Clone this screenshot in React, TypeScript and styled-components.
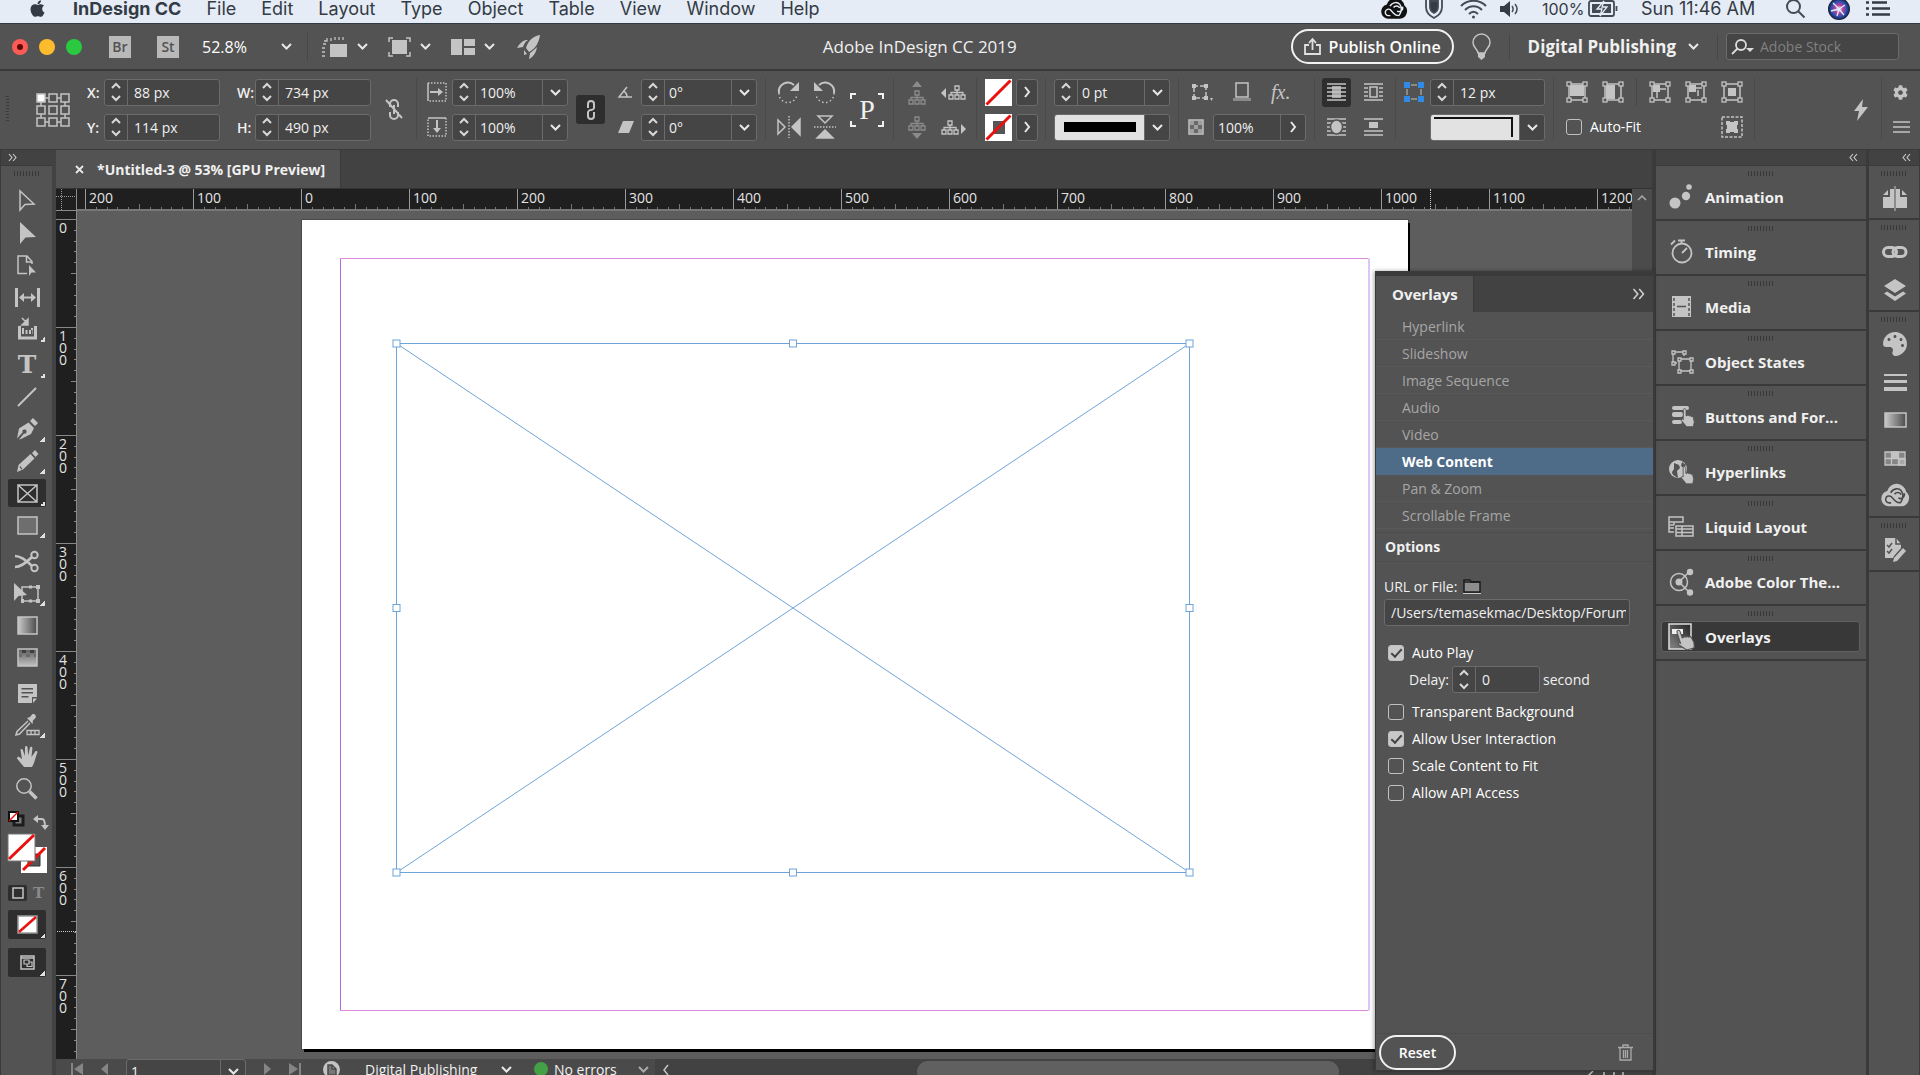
import React from "react";
import styled, { createGlobalStyle, css } from "styled-components";
import { FaApple, FaCog, FaPalette } from "react-icons/fa";

const c = {
  panel: "#535353",
  dark: "#424242",
  line: "#3a3a3a",
  field: "#454545",
  edge: "#6b6b6b",
  icon: "#c4c4c4",
  text: "#f0f0f0",
  ruler: "#1f1f1f",
  canvas: "#5d5d5d",
};

const Global = createGlobalStyle`
  * { box-sizing: border-box; }
  body { margin: 0; overflow: hidden; background: ${c.panel}; }
  body, button, input { font-family: "Open Sans", "Noto Sans", sans-serif; }
  button { padding: 0; border: 0; background: none; color: inherit; cursor: pointer; }
  button, label, span { white-space: nowrap; }
  svg { display: block; flex: none; overflow: visible; }
  input { min-width: 0; }
`;

/* ---------- shell ---------- */

const Shell = styled.div`
  display: flex;
  flex-direction: column;
  height: calc(100vh + 12px);
  color: ${c.text};
  font-size: 14px;
`;

const MenuBar = styled.nav`
  display: flex;
  align-items: center;
  height: 24px;
  padding: 0 30px 6px 28px;
  background: #e6ecf5;
  border-bottom: 1px solid #2f3a44;
  color: #333b45;
  font: 400 18px/20px Inter, sans-serif;
`;

const MenuItems = styled.div`
  display: flex;
  gap: 25px;
  flex: 1;
  padding-left: 26px;
`;

const MenuItem = styled.button<{ $bold?: boolean }>`
  font: ${(p) => (p.$bold ? 700 : 400)} 18px/20px Inter, sans-serif;
`;

const MenuExtras = styled.div`
  display: flex;
  align-items: center;
`;

const Extra = styled.span<{ $w: number; $size?: number }>`
  width: ${(p) => p.$w}px;
  display: flex;
  font-size: ${(p) => p.$size ?? 18}px;
`;

const TitleBar = styled.header`
  display: flex;
  align-items: center;
  height: 47px;
  padding: 0 21px 0 12px;
  background: ${c.panel};
  border-bottom: 2px solid ${c.line};
`;

const Cluster = styled.div<{ $gap: number; $ml?: number }>`
  display: flex;
  align-items: center;
  gap: ${(p) => p.$gap}px;
  margin-left: ${(p) => p.$ml ?? 0}px;
`;

const Light = styled.button<{ $c: string }>`
  display: grid;
  place-items: center;
  width: 16px;
  height: 16px;
  border-radius: 50%;
  background: ${(p) => p.$c};
  i { width: 6px; height: 6px; border-radius: 50%; background: #5c0a08; }
`;

const AppBadge = styled.button`
  width: 22px;
  height: 22px;
  background: #b9b9b9;
  color: #535353;
  font-size: 14px;
  font-weight: 600;
  line-height: 22px;
`;

const ZoomInput = styled.input`
  width: 73px;
  padding: 0 2px 0 1px;
  border: 0;
  background: none;
  color: #fff;
  font-size: 16px;
  font-weight: 500;
`;

const WindowTitle = styled.h1`
  flex: 1;
  margin: 0;
  padding-left: 8px;
  text-align: center;
  font-size: 17px;
  font-weight: 400;
`;

const Pill = styled.button<{ $w: number; $size: number }>`
  display: flex;
  align-items: center;
  justify-content: center;
  gap: 8px;
  width: ${(p) => p.$w}px;
  height: 35px;
  border: 2px solid #f2f2f2;
  border-radius: 18px;
  color: #fff;
  font-size: ${(p) => p.$size}px;
  font-weight: 600;
`;

const VLine = styled.i<{ $h: number }>`
  width: 1px;
  height: ${(p) => p.$h}px;
  background: #474747;
`;

const TightLine = styled(VLine)`
  margin: 0 -2px;
`;

const Workspace = styled.button`
  display: flex;
  align-items: center;
  gap: 12px;
  font-size: 17px;
  font-weight: 700;
`;

const StockSearch = styled.label`
  display: flex;
  align-items: center;
  gap: 5px;
  width: 173px;
  height: 27px;
  padding-left: 5px;
  border: 1px solid ${c.edge};
  border-radius: 3px;
  background: ${c.field};
  input {
    width: 120px;
    padding: 0;
    border: 0;
    background: none;
    color: ${c.text};
    font-size: 14px;
  }
  input::placeholder { color: #808080; }
`;

/* ---------- control strip ---------- */

const ControlBar = styled.section`
  display: flex;
  height: 79px;
  padding: 7px 0 9px;
  background: ${c.panel};
  border-bottom: 1px solid ${c.line};
`;

const Group = styled.div<{ $cols?: string; $pl?: number; $pr?: number; $grow?: boolean; $open?: boolean }>`
  display: grid;
  grid-template-columns: ${(p) => p.$cols ?? "auto"};
  grid-template-rows: 28px 28px;
  row-gap: 7px;
  align-items: center;
  padding: 0 ${(p) => p.$pr ?? 8}px 0 ${(p) => p.$pl ?? 8}px;
  border-right: ${(p) => (p.$open ? 0 : 1)}px solid #4a4a4a;
  ${(p) => p.$grow && css`flex: 1; justify-content: end;`}
`;

const Tall = styled.div`
  grid-row: span 2;
  display: flex;
`;

const Line = styled.div<{ $gap: number; $between?: boolean; $pl?: number }>`
  display: flex;
  align-items: center;
  gap: ${(p) => p.$gap}px;
  padding-left: ${(p) => p.$pl ?? 0}px;
  ${(p) => p.$between && css`justify-content: space-between;`}
`;

const Tag = styled.label`
  font-size: 14px;
  font-weight: 600;
`;

const Field = styled.div<{ $w: number }>`
  display: flex;
  width: ${(p) => p.$w}px;
  height: 27px;
  border: 1px solid ${c.edge};
  border-radius: 3px;
  background: ${c.field};
  overflow: hidden;
`;

const Steppers = styled.span`
  display: flex;
  flex-direction: column;
  width: 23px;
  border-right: 1px solid ${c.edge};
  button { display: grid; place-items: center; flex: 1; }
`;

const Value = styled.input<{ $strong?: boolean }>`
  flex: 1;
  width: 0;
  padding: 0 0 0 ${(p) => (p.$strong ? 4 : 6)}px;
  border: 0;
  background: none;
  color: ${c.text};
  font-size: 14px;
  font-weight: ${(p) => (p.$strong ? 500 : 400)};
`;

const DropButton = styled.button`
  display: grid;
  place-items: center;
  width: 25px;
  border-left: 1px solid ${c.edge};
`;

const MoreButton = styled.button`
  display: grid;
  place-items: center;
  width: 22px;
  height: 27px;
  border: 1px solid ${c.edge};
  border-radius: 3px;
  background: ${c.field};
`;

const Preview = styled.span`
  display: grid;
  place-items: center;
  flex: 1;
  background: #e2e2e2;
`;

const Toggle = styled.button<{ $on?: boolean }>`
  display: grid;
  place-items: center;
  width: 29px;
  height: 29px;
  border-radius: 3px;
  background: ${(p) => (p.$on ? "#2e2e2e" : "transparent")};
`;

const IconButton = styled.button<{ $dim?: boolean }>`
  display: block;
  opacity: ${(p) => (p.$dim ? 0.5 : 1)};
`;

const Frame = styled.span`
  display: grid;
  place-items: center;
  grid-area: 1 / 1;
  color: #f0f0f0;
  font: 28px/34px "Liberation Serif", serif;
`;

const Stacked = styled.span`
  display: grid;
`;

const Fx = styled.span`
  font: italic 20px/24px "Liberation Serif", serif;
  color: ${c.icon};
`;

const Check = styled.label`
  display: flex;
  align-items: center;
  gap: 8px;
  font-size: 14px;
  font-weight: 500;
  line-height: 16px;
  color: #fff;
`;

const Box = styled.input`
  appearance: none;
  flex: none;
  display: grid;
  place-items: center;
  width: 16px;
  height: 16px;
  margin: 0;
  border: 1px solid #c0c0c0;
  border-radius: 3px;
  &:checked { background: #c8c8c8; }
  &:checked::after {
    content: "";
    width: 9px;
    height: 4px;
    margin-bottom: 3px;
    border: solid #444;
    border-width: 0 0 2px 2px;
    rotate: -48deg;
  }
`;

/* ---------- body ---------- */

const Body = styled.div`
  display: flex;
  flex: 1;
  min-height: 0;
`;

const Toolbar = styled.aside`
  display: flex;
  flex-direction: column;
  width: 56px;
  background: ${c.panel};
  border-left: 1px solid ${c.line};
  border-right: 4px solid ${c.dark};
`;

const PanelTop = styled.div<{ $right?: boolean }>`
  display: flex;
  align-items: center;
  justify-content: ${(p) => (p.$right ? "flex-end" : "flex-start")};
  flex: none;
  height: 16px;
  padding: 0 8px 0 7px;
  background: ${c.dark};
  border-bottom: 1px solid ${c.line};
`;

const Grip = styled.i`
  display: block;
  flex: none;
  width: 26px;
  height: 5px;
  margin: 5px auto 0;
  background: repeating-linear-gradient(90deg, #383838 0 1px, transparent 1px 3px);
`;

const Tools = styled.div`
  display: flex;
  flex-direction: column;
  gap: 4px;
  padding: 9px 0 0 7px;
`;

const Tool = styled.button<{ $on?: boolean }>`
  display: grid;
  place-items: center;
  position: relative;
  width: 38px;
  height: 28px;
  margin: 2px 0;
  border-radius: 2px;
  background: ${(p) => (p.$on ? "#2e2e2e" : "transparent")};
`;

const ModeTool = styled(Tool)`
  height: 29px;
  margin: 0;
`;

const Flyout = styled.i`
  position: absolute;
  right: 1px;
  bottom: 1px;
  width: 5px;
  height: 5px;
  background: linear-gradient(135deg, transparent 50%, #e0e0e0 50%);
`;

const ToolSet = styled.div`
  display: flex;
  flex-direction: column;
`;

const SwatchArea = styled.div`
  display: flex;
  flex-direction: column;
  gap: 9px;
  padding: 6px 0 0 7px;
`;

const SerifT = styled.span<{ $size: number; $lh: number; $c?: string }>`
  font: 700 ${(p) => p.$size}px/${(p) => p.$lh}px "DejaVu Serif", serif;
  color: ${(p) => p.$c ?? c.icon};
`;

/* ---------- document ---------- */

const Doc = styled.main`
  position: relative;
  display: flex;
  flex-direction: column;
  flex: 1;
  min-width: 0;
  background: ${c.dark};
  border-right: 4px solid ${c.line};
`;

const Tabs = styled.div`
  display: flex;
  height: 39px;
  border-bottom: 1px solid #333;
`;

const Tab = styled.div`
  display: flex;
  align-items: center;
  gap: 13px;
  width: 285px;
  padding-left: 19px;
  background: ${c.panel};
  border-right: 1px solid ${c.line};
  font-size: 14px;
  font-weight: 700;
`;

const Stage = styled.div`
  display: grid;
  grid-template: 22px 1fr / 21px 1fr 20px;
  flex: 1;
  min-height: 0;
`;

const Corner = styled.div`
  background: ${c.ruler};
  border-right: 1px solid #8a8a8a;
  border-bottom: 1px solid #8a8a8a;
`;

const RulerX = styled.div`
  position: relative;
  display: flex;
  padding-left: 8px;
  overflow: hidden;
  background: ${c.ruler};
  border-bottom: 2px solid #777;
`;

const RulerY = styled.div`
  position: relative;
  padding-top: 8px;
  overflow: hidden;
  background: ${c.ruler};
  border-right: 1px solid #8a8a8a;
`;

const SegX = styled.div`
  display: grid;
  flex: none;
  width: 108px;
  > * { grid-area: 1 / 1; }
  span { padding-left: 4px; font-size: 14px; line-height: 18px; color: #e2e2e2; }
`;

const SegY = styled.div`
  display: grid;
  height: 108px;
  > * { grid-area: 1 / 1; }
  p {
    width: 9px;
    margin: 3px 0 0 3px;
    font-size: 14px;
    line-height: 12px;
    color: #e2e2e2;
    word-break: break-all;
  }
`;

const MarkX = styled.i`
  position: absolute;
  left: 1353px;
  top: 0;
  height: 20px;
  border-left: 1px dotted #ccc;
`;

const MarkY = styled.i`
  position: absolute;
  left: 1px;
  top: 720px;
  width: 19px;
  border-top: 1px dotted #ccc;
`;

const ScrollColumn = styled.div`
  grid-row: 1 / 3;
  grid-column: 3;
  padding: 6px 0 0 5px;
  background: #4b4b4b;
`;

const Canvas = styled.div`
  position: relative;
  overflow: hidden;
  background: ${c.canvas};
`;

const Page = styled.div`
  position: absolute;
  left: 225px;
  top: 9px;
  width: 1106px;
  height: 829px;
  background: #fff;
  box-shadow: 2px 3px 0 #000, 0 0 0 1px #4a4a4a;
`;

const StatusBar = styled.footer`
  display: flex;
  flex: none;
  height: 28px;
  background: #4a4a4a;
`;

const StatusTools = styled.div`
  display: flex;
  align-items: center;
  width: 599px;
  padding: 0 8px 8px 15px;
  font-size: 14px;
`;

const PageField = styled(Field)`
  flex: none;
  align-self: flex-start;
  height: 24px;
  margin: 0 18px;
`;

const StatusButton = styled.button<{ $w: number }>`
  display: flex;
  align-items: center;
  justify-content: space-between;
  width: ${(p) => p.$w}px;
  font-size: 14px;
  font-weight: 500;
`;

const Dot = styled.i`
  width: 14px;
  height: 14px;
  border-radius: 50%;
  background: #43a047;
`;

const ScrollTrack = styled.div`
  display: flex;
  align-items: flex-start;
  flex: 1;
  gap: 248px;
  padding: 2px 0 0 8px;
  background: ${c.dark};
`;

const Thumb = styled.div`
  width: 422px;
  height: 22px;
  border-radius: 11px;
  background: #606060;
`;

/* ---------- overlays panel ---------- */

const Overlays = styled.section`
  position: absolute;
  top: 121px;
  right: -3px;
  bottom: 16px;
  display: flex;
  flex-direction: column;
  width: 280px;
  background: ${c.panel};
  border: 1px solid ${c.line};
  border-top-width: 5px;
  border-right-width: 2px;
  box-shadow: -1px 0 4px rgba(0, 0, 0, 0.35);
`;

const OverlaysHead = styled.header`
  display: flex;
  align-items: center;
  justify-content: space-between;
  height: 36px;
  padding-right: 8px;
  background: ${c.dark};
  h2 {
    width: 98px;
    margin: 0;
    padding-left: 16px;
    background: ${c.panel};
    border-right: 1px solid ${c.line};
    font-size: 15px;
    font-weight: 700;
    line-height: 36px;
  }
`;

const Kinds = styled.ul`
  margin: 1px 0 3px;
  padding: 0;
  list-style: none;
`;

const Kind = styled.li<{ $on?: boolean }>`
  button {
    width: 100%;
    height: 27px;
    padding-left: 26px;
    border-bottom: 1px solid #595959;
    text-align: left;
    font-size: 14px;
    color: #a6a6a6;
    ${(p) =>
      p.$on &&
      css`
        background: #4e6b87;
        border-color: #4e6b87;
        color: #fff;
        font-weight: 700;
      `}
  }
`;

const OptionsTitle = styled.h3`
  margin: 0;
  padding-left: 9px;
  border: solid #4d4d4d;
  border-width: 1px 0;
  font-size: 14px;
  font-weight: 700;
  line-height: 28px;
`;

const OptionsForm = styled.form`
  display: flex;
  flex-direction: column;
  flex: 1;
  padding: 14px 23px 0 8px;
`;

const UrlLabel = styled.div`
  display: flex;
  align-items: center;
  gap: 6px;
  height: 20px;
  margin-bottom: 3px;
  font-weight: 500;
`;

const UrlInput = styled.input`
  height: 27px;
  padding: 0 3px 0 6px;
  border: 1px solid ${c.edge};
  border-radius: 3px;
  background: ${c.field};
  color: ${c.text};
  font-size: 14px;
`;

const Choices = styled.div`
  display: flex;
  flex-direction: column;
  gap: 11px;
  padding: 19px 0 0 4px;
`;

const Delay = styled.div`
  display: flex;
  align-items: center;
  gap: 3px;
  height: 27px;
  margin: -6px 0 0 21px;
  font-weight: 500;
`;

const OverlaysFoot = styled.footer`
  display: flex;
  align-items: center;
  justify-content: space-between;
  height: 37px;
  padding: 0 20px 0 3px;
  border-top: 1px solid #4d4d4d;
`;

/* ---------- docks ---------- */

const Dock = styled.aside`
  width: 213px;
  flex: none;
  background: ${c.panel};
  border-right: 3px solid ${c.line};
`;

const DockRow = styled.div`
  height: 55px;
  border-bottom: 2px solid ${c.line};
  overflow: hidden;
`;

const DockButton = styled.button<{ $on?: boolean }>`
  display: flex;
  align-items: center;
  gap: 10px;
  width: 199px;
  height: 31px;
  margin: 5px 0 0 5px;
  padding-left: 5px;
  border: 1px solid ${(p) => (p.$on ? "#606060" : "transparent")};
  border-radius: 3px;
  background: ${(p) => (p.$on ? "#383838" : "transparent")};
  font-size: 15px;
  font-weight: 700;
  svg { margin: 0 1px; }
`;

const IconDock = styled.aside`
  width: 51px;
  flex: none;
  background: ${c.panel};
  border-right: 1px solid ${c.line};
`;

const IconSection = styled.div`
  border-bottom: 2px solid ${c.line};
  padding-bottom: 1px;
`;

const IconStack = styled.div`
  padding: 3px 0 0 2px;
`;

const DockIcon = styled.button`
  display: grid;
  place-items: center;
  width: 100%;
  height: 38px;
`;

const MirroredPalette = styled(FaPalette)`
  transform: scaleX(-1);
`;

/* ---------- glyphs ---------- */

type G = { w?: number; h?: number; vb?: string; children?: React.ReactNode; sw?: number; fill?: string; stroke?: string };
const Glyph = ({ w = 24, h = 24, vb, children, sw = 1.5, fill = "none", stroke = c.icon }: G) => (
  <svg width={w} height={h} viewBox={vb ?? `0 0 ${w} ${h}`} fill={fill} stroke={stroke} strokeWidth={sw} aria-hidden="true">
    {children}
  </svg>
);
const Solid = (p: G) => <Glyph {...p} fill={c.icon} stroke="none" />;

const Down = ({ color = "#e8e8e8" }: { color?: string }) => (
  <Glyph w={11} h={7} sw={2} stroke={color}><path d="M1 1l4.500 4.500L10 1" /></Glyph>
);
const Up = () => <Glyph w={10} h={6} sw={2} stroke="#d8d8d8"><path d="M1 5l4-4 4 4" /></Glyph>;
const SmallDown = () => <Glyph w={10} h={6} sw={2} stroke="#d8d8d8"><path d="M1 1l4 4 4-4" /></Glyph>;
const Right = () => <Glyph w={6} h={10} sw={2} stroke="#e8e8e8"><path d="M1 0l4 5-4 5" /></Glyph>;
const Chevrons = ({ left, big }: { left?: boolean; big?: boolean }) => (
  <Glyph w={big ? 13 : 9} h={big ? 10 : 7} vb="0 0 9 7" sw={1.1} stroke="#cfcfcf">
    <path d={left ? "M4 0L1 3.500 4 7M8 0L5 3.500 8 7" : "M1 0l3 3.500L1 7M5 0l3 3.500L5 7"} />
  </Glyph>
);

const NoneSwatch = ({ size = 27, stroke = false }: { size?: number; stroke?: boolean }) => (
  <svg width={size} height={size} viewBox="0 0 27 27" aria-hidden="true">
    <path d="M0 0h27v27H0z" fill="#fff" />
    {stroke && <path d="M8 7h12v13H8z" fill="#555" />}
    <path d="M1.500 25.500L25.500 1.500" stroke="#e8110f" strokeWidth="3" />
  </svg>
);

const CC = ({ w, color, bg }: { w: number; color: string; bg: string }) => (
  <svg width={w} height={w * 0.76} viewBox="0 0 29 22" aria-hidden="true">
    <path d="M8 22a8 8 0 0 1-1.500-15.800A10 10 0 0 1 26 7a8.500 8.500 0 0 1-5 15z" fill={color} />
    <path d="M20 18.500c-3 0-4.500-1-6-2.700L10.500 12a3.600 3.600 0 1 0-2 6.500h2M10 8c3-5 8.500-5 11-2s2 9-1 12.500M14 9.500a4.200 4.200 0 0 1 7 .5M18 13.500a4.200 4.200 0 0 0 6-5" fill="none" stroke={bg} strokeWidth="1.600" />
  </svg>
);

const corners = (s: number) => (
  <>
    {[[0, 0], [s, 0], [0, s], [s, s]].map(([x, y]) => (
      <rect key={`${x}-${y}`} x={x} y={y} width="4" height="4" fill={c.panel} strokeWidth="1.300" />
    ))}
  </>
);

const Tree = ({ dir }: { dir: "up" | "down" | "left" | "right" }) => {
  const ox = dir === "left" ? 7 : 0;
  const oy = dir === "up" ? 9 : 0;
  const w = dir === "up" || dir === "down" ? 18 : 25;
  const h = dir === "up" || dir === "down" ? 23 : 15;
  const arrow = { up: "M9 0l5 6H4z", down: "M9 23l5-6H4z", left: "M0 8l5-5v10z", right: "M25 9l-5-5v10z" }[dir];
  return (
    <Glyph w={w} h={h} sw={1.300}>
      <g transform={`translate(${ox} ${oy})`}>
        <path d="M7 1h4v4H7zM1 10h4v4H1zM7 10h4v4H7zM13 10h4v4h-4zM9 5v5M3 10V7.500h12V10" />
      </g>
      <path d={arrow} fill={c.icon} stroke="none" />
    </Glyph>
  );
};

const Hand = ({ x = 0, y = 0, s = 1 }: { x?: number; y?: number; s?: number }) => (
  <path
    transform={`translate(${x} ${y}) scale(${s})`}
    d="M4 0.500c1 0 1.500.8 1.500 1.600V7l1 .1c.3-.6 1.700-.6 2 .3.400-.5 1.700-.4 2 .6.600-.4 1.600 0 1.700.8L13 13l-1 4H6L1.500 11.500c-.6-1 .4-2 1.200-1.400l.3.400V2.100C3 1.300 3.200.500 4 .5z"
    fill={c.icon}
    stroke={c.panel}
    strokeWidth=".8"
  />
);

/* ---------- small composites ---------- */

const StepField = ({ w, value, label, drop, id }: { w: number; value: string; label: string; drop?: boolean; id?: string }) => (
  <Field $w={w}>
    <Steppers>
      <button type="button" aria-label={`Increase ${label}`}><Up /></button>
      <button type="button" aria-label={`Decrease ${label}`}><SmallDown /></button>
    </Steppers>
    <Value id={id} aria-label={label} defaultValue={value} $strong={drop} />
    {drop && <DropButton type="button" aria-label={`${label} presets`}><Down /></DropButton>}
  </Field>
);

const CheckRow = ({ text, on }: { text: string; on?: boolean }) => (
  <Check><Box type="checkbox" defaultChecked={on} />{text}</Check>
);

const tools: { name: string; fly?: boolean; on?: boolean; art: React.ReactNode }[][] = [
  [
    { name: "Selection", art: <Glyph w={18} h={22}><path d="M2 1v19l5-5.500 9-.5z" /></Glyph> },
    { name: "Direct Selection", art: <Solid w={18} h={22}><path d="M2 0v22l5.500-6.500 10.500-.5z" /></Solid> },
    { name: "Page", art: <Glyph w={20} h={21}><path d="M10 18.500H1V1h9l5 5.500V9M9.500 1v6H15" /><path d="M12 10v11l2.500-3.500H19z" fill={c.icon} stroke="none" /></Glyph> },
    { name: "Gap", art: <Solid w={25} h={19}><path d="M0 0h3v19H0zM22 0h3v19h-3zM4 9.500L9 5v3.500h7V5l5 4.500-5 4.500v-3.500H9V14z" /></Solid> },
    { name: "Content Collector", fly: true, art: <Glyph w={19} h={22}><path d="M1.500 8v12h16V8" strokeWidth="3" /><path d="M4 0l5 5M10 1v6H4z" fill={c.icon} /><path d="M4 11h2M13 11h2M4 15h11M4 13h11" strokeDasharray="2 1.500" strokeWidth="2" /></Glyph> },
  ],
  [
    { name: "Type", fly: true, art: <SerifT $size={25} $lh={24}>T</SerifT> },
    { name: "Line", art: <Glyph w={20} h={20} sw={2}><path d="M1 19L19 1" /></Glyph> },
    { name: "Pen", fly: true, art: <Solid w={22} h={22}><path d="M14 3l3-3 5 5-3 3zM12.500 4.500l5.500 5.500-3 6L5 21l-2 .5 5-6a2 2 0 1 0-1.300-1.200L1 20.500l2-10z" /></Solid> },
    { name: "Pencil", fly: true, art: <Solid w={22} h={22}><path d="M16 3l3-3 3.500 4-3 3zM14.500 4l4 4.500L7 19.500 1 22l1.500-7zM3.500 17l2 2.500 1-.5-2.300-3z" fillRule="evenodd" /></Solid> },
    { name: "Rectangle Frame", fly: true, on: true, art: <Glyph w={21} h={19}><path d="M1 1h19v17H1zM1 1l19 17M20 1L1 18" /></Glyph> },
    { name: "Rectangle", fly: true, art: <Glyph w={21} h={19}><path d="M1 1h19v17H1z" fill="#6e6e6e" /></Glyph> },
  ],
  [
    { name: "Scissors", art: <Glyph w={24} h={21} sw={2}><circle cx="19.500" cy="4" r="3.200" /><circle cx="19.500" cy="17" r="3.200" /><path d="M0 5c6 0 11 4 17 10M0 16c6 0 11-4 17-10" strokeWidth="2.600" /></Glyph> },
    { name: "Free Transform", fly: true, art: <Glyph w={26} h={21}><path d="M8 4h16v14H8z" /><path d="M22 2h4v4h-4zM22 16h4v4h-4zM7 16h3v4H7zM15 2.500h3v3h-3zM15 16.500h3v3h-3z" fill={c.icon} stroke="none" /><path d="M0 0v18l4.500-5 8.500-1z" fill={c.icon} stroke="none" /></Glyph> },
    { name: "Gradient Swatch", art: <Glyph w={21} h={19}><defs><linearGradient id="gs"><stop stopColor="#c9c9c9" /><stop offset="1" stopColor="#4b4b4b" /></linearGradient></defs><path d="M1 1h19v17H1z" fill="url(#gs)" /></Glyph> },
    { name: "Gradient Feather", art: <Glyph w={21} h={19}><defs><linearGradient id="gf" x2="0" y2="1"><stop stopColor="#5b5b5b" /><stop offset="1" stopColor="#c0c0c0" /></linearGradient></defs><path d="M1 1h19v17H1z" fill="url(#gf)" /><path d="M5 2h4v3H5zM13 2h4v3h-4z" fill="#3e3e3e" stroke="none" /><path d="M2 6h3v3H2zM9 6h4v3H9zM17 6h2v3h-2z" fill="#6a6a6a" stroke="none" /></Glyph> },
  ],
  [
    { name: "Note", art: <Solid w={19} h={19}><path d="M0 0h19v13h-5v6H0zM19 14.500L15 19v-4.500zM3.500 4v1.500H15V4zM3.500 8v1.500H15V8zM3.500 12v1.500h7V12z" fillRule="evenodd" /></Solid> },
    { name: "Color Theme", fly: true, art: <Glyph w={25} h={22}><path d="M13 7L2 17.500 1 21l3.500-1L15 9" /><path d="M12 4l3-1 2-2.500c2-1.500 5 1 3.500 3.500L18 6.500 17.500 10z" fill={c.icon} stroke="none" /><path d="M12 16.500h12v4H12zM16 16.500v4M20 16.500v4" strokeWidth="1.300" /></Glyph> },
    { name: "Hand", art: <Solid w={21} h={22}><path d="M7 21L0 12.500c0-2 2-2 3-1l2 1.800L3.500 4c.3-1.500 2-1.500 2.400 0l2 6L8 1c.3-1.500 2.200-1.500 2.500 0l.7 8.500L13 1.500c.5-1.400 2.300-1 2.400.4L14.500 11l3.800-5.500c1-1 2.500 0 2 1.300C18.500 11 18 16 15 21z" /></Solid> },
    { name: "Zoom", art: <Glyph w={22} h={22}><circle cx="8" cy="8" r="7.200" /><path d="M13.500 13.500l7 7" strokeWidth="3.500" /></Glyph> },
  ],
];

const dockRows: { name: string; on?: boolean; art: React.ReactNode }[] = [
  { name: "Animation", art: <Solid w={26} h={25}><circle cx="7" cy="19" r="5.500" /><circle cx="18" cy="12" r="4.200" /><circle cx="21" cy="3" r="2.800" /></Solid> },
  { name: "Timing", art: <Glyph w={26} h={25} sw={1.800}><circle cx="14" cy="14" r="9.500" /><path d="M14 14l5-5M10 1.500h7M13.500 2v3M3 5.500l4-4" /></Glyph> },
  { name: "Media", art: <Solid w={26} h={25}><path d="M4 2h19v21H4z" /><path d="M9 12.500h9" stroke={c.panel} strokeWidth="1.500" /><path d="M6 4v18M21 4v18" stroke={c.panel} strokeWidth="1.500" strokeDasharray="3 2" /></Solid> },
  { name: "Object States", art: <Glyph w={26} h={25} sw={1.300}><path d="M5 3h11v4M5 3v11h4M11 10h12v12H11z" /><path d="M4 2h3v3H4zM15 2h3v3h-3zM4 13h3v3H4zM10 9h3v3h-3zM22 9h3v3h-3zM10 21h3v3h-3zM22 21h3v3h-3z" fill={c.panel} /></Glyph> },
  { name: "Buttons and For...", art: <Solid w={26} h={25}><rect x="4" y="2" width="17" height="4" rx="2" /><rect x="4" y="8" width="11" height="5" rx="2" /><rect x="4" y="16" width="10" height="4" rx="2" /><Hand x={12} y={4} s={1.100} /></Solid> },
  { name: "Hyperlinks", art: <Solid w={26} h={25}><circle cx="10" cy="10" r="9" /><path d="M6 4l5 2 1 3-3 3 1 7c-3-2-6-3-6-6l2-3zM14 3l4 3-2 3-3-2z" fill={c.panel} /><Hand x={12} y={7} s={1.050} /></Solid> },
  { name: "Liquid Layout", art: <Glyph w={26} h={25} sw={1.500}><path d="M1 3h14v5H1zM1 8v10h5M1 11h5M1 14h5M6 8v3M8 12h17v10H8zM8 15h17M14 12v10M14 18.500h11M8 18.500h6" /></Glyph> },
  { name: "Adobe Color The...", art: <Glyph w={26} h={25} sw={1.500}><circle cx="11" cy="13" r="8.500" /><path d="M11 13L21 3M11 13l10 10" /><g fill={c.icon} stroke="none"><circle cx="11" cy="13" r="3.500" /><circle cx="22" cy="3" r="3.200" /><circle cx="22" cy="23.500" r="3.200" /></g></Glyph> },
  { name: "Overlays", on: true, art: <Glyph w={26} h={28}><defs><linearGradient id="ov" x1="1" y1="0" x2="0" y2="1"><stop stopColor="#222" /><stop offset="1" stopColor="#888" /></linearGradient></defs><path d="M1 1h22v25H1z" fill="url(#ov)" stroke="#ddd" /><path d="M4 6h11v5H4z" fill="#eee" stroke="none" /><g transform="rotate(-18 14 18)"><Hand x={8} y={6} s={1.300} /></g></Glyph> },
];

const dockSections: { name: string; art: React.ReactNode }[][] = [
  [{ name: "Pages", art: <Solid w={24} h={25}><path d="M11 3v19H0V11h7V3zM13 3v19h11V11h-7V3zM0 9l5-5v5zM24 9l-5-5v5zM11.500 0h1v25h-1z" /></Solid> }],
  [
    { name: "Links", art: <Glyph w={26} h={12} sw={3}><rect x="1.500" y="1.500" width="13" height="9" rx="4.500" /><rect x="11" y="1.500" width="13" height="9" rx="4.500" /></Glyph> },
    { name: "Layers", art: <Solid w={22} h={22}><path d="M11 0l11 7-11 7L0 7zM3 12.500l8 5 8-5 3 2L11 22 0 14.500z" /></Solid> },
  ],
  [
    { name: "Color", art: <MirroredPalette size={24} color={c.icon} /> },
    { name: "Stroke", art: <Solid w={23} h={17}><path d="M0 0h23v2H0zM0 6h23v3H0zM0 13h23v4H0z" /></Solid> },
    { name: "Gradient", art: <Glyph w={23} h={16}><path d="M1 1h21v14H1z" fill="url(#gs)" /></Glyph> },
    { name: "Swatches", art: <Glyph w={22} h={15} sw={1.300}><path d="M1 1h20v13H1z" fill="#858585" /><path d="M8 1h6v6H8z" fill={c.icon} /><path d="M15 8h6v6h-6z" fill="#a8a8a8" /><path d="M1 7.500h20M7.500 1v13M14.500 1v13" /></Glyph> },
    { name: "CC Libraries", art: <CC w={28} color={c.icon} bg="#4a4a4a" /> },
  ],
  [{ name: "Preflight", art: <Solid w={22} h={24}><path d="M1 0h11l5 6v4l-7 8-1 2H1z" /><path d="M3 7l2 2 3-4M3 13l2 2 3-4M12 0v6h5" fill="none" stroke={c.panel} strokeWidth="1.500" /><path d="M19 10l3 3-9 10-4 1 1-4z" /></Solid> }],
];

const kinds = ["Hyperlink", "Slideshow", "Image Sequence", "Audio", "Video", "Web Content", "Pan & Zoom", "Scrollable Frame"];
const menus = ["File", "Edit", "Layout", "Type", "Object", "Table", "View", "Window", "Help"];
const ticks = [1, 2, 3, 4, 5, 6, 7, 8, 9];

const wrapLines = (
  <path d="M0 1h19M0 5h19M0 9h19M0 13h19M0 17h19" strokeWidth="1.300" />
);

/* ---------- sections ---------- */

const SystemMenu = () => (
  <MenuBar>
    <FaApple size={19} />
    <MenuItems>
      <MenuItem $bold>InDesign CC</MenuItem>
      {menus.map((m) => <MenuItem key={m}>{m}</MenuItem>)}
    </MenuItems>
    <MenuExtras>
      <Extra $w={44}><CC w={26} color="#111" bg="#e6ecf5" /></Extra>
      <Extra $w={35}><Glyph w={18} h={21} stroke="#444b54" sw={1.800}><path d="M1 0h16v9c0 5-4 9-8 11-4-2-8-6-8-11z" /><path d="M5 3h8v6c0 3-2 5-4 6-2-1-4-3-4-6z" fill="#333b45" /></Glyph></Extra>
      <Extra $w={40}><Glyph w={27} h={20} stroke="#444b54" sw={2}><path d="M1 7c7-7 18-7 25 0M5 11c5-5 12-5 17 0M9 15c3-3 6-3 9 0" /><circle cx="13.500" cy="18" r="1.500" fill="#444b54" stroke="none" /></Glyph></Extra>
      <Extra $w={42}><Glyph w={18} h={18} stroke="#444b54" sw={1.500}><path d="M0 6h4l6-5v16l-6-5H0z" fill="#333b45" stroke="none" /><path d="M12 6c1.500 2 1.500 4 0 6M15 4c2.500 3 2.500 7 0 10" /></Glyph></Extra>
      <Extra $w={46} $size={16}>100%</Extra>
      <Extra $w={53}><Glyph w={30} h={17} stroke="#444b54" sw={1.800}><rect x="1" y="1" width="25" height="15" rx="2" /><path d="M4 4h19v9H4z" fill="#444b54" stroke="none" /><path d="M28.500 6v5" /><path d="M16 1l-7 8h5l-2 7 7-9h-5z" fill="#444b54" stroke="#e6ecf5" strokeWidth="1.300" /></Glyph></Extra>
      <Extra $w={145}>Sun 11:46 AM</Extra>
      <Extra $w={42}><Glyph w={19} h={19} stroke="#444b54" sw={2}><circle cx="7.500" cy="7.500" r="6.500" /><path d="M12.500 12.500l6 6" /></Glyph></Extra>
      <Extra $w={38}>
        <svg width="22" height="22" viewBox="0 0 22 22" aria-hidden="true">
          <defs><radialGradient id="siri"><stop stopColor="#e8f6ff" /><stop offset=".35" stopColor="#c13f9a" /><stop offset=".7" stopColor="#2b4fb0" /><stop offset="1" stopColor="#161a2c" /></radialGradient></defs>
          <circle cx="11" cy="11" r="11" fill="url(#siri)" />
          <path d="M5 5l6 6 6-4M11 11l-2 7M11 11l5 6M3 13l8-2" stroke="#d8f4ff" strokeWidth="1.300" fill="none" />
        </svg>
      </Extra>
      <Glyph w={24} h={15} stroke="#333b45" sw={2.500}><path d="M0 1.500h3M6 1.500h15M0 7.500h3M6 7.500h18M0 13.500h3M6 13.500h18" /></Glyph>
    </MenuExtras>
  </MenuBar>
);

const WindowBar = () => (
  <TitleBar>
    <Cluster $gap={11}>
      <Light $c="#fc5b57" aria-label="Close"><i /></Light>
      <Light $c="#fdbc2e" aria-label="Minimize" />
      <Light $c="#2ac940" aria-label="Zoom" />
    </Cluster>
    <Cluster $gap={26} $ml={27}>
      <AppBadge>Br</AppBadge>
      <AppBadge>St</AppBadge>
    </Cluster>
    <Cluster $gap={7} $ml={22}>
      <ZoomInput aria-label="Zoom level" defaultValue="52.8%" />
      <button aria-label="Zoom presets"><Down /></button>
    </Cluster>
    <Cluster $gap={14} $ml={15}>
      <VLine $h={28} />
      <Cluster $gap={9}>
        <Glyph w={26} h={20}><path d="M8 7h17v13H8z" fill={c.icon} stroke="none" /><path d="M9 1v3M13 0v3M17 0v3M21 0v3M1 7h3M0 11h3M0 15h3M0 19h3M5 1v3H2" strokeWidth="1.300" /></Glyph>
        <button aria-label="View options"><Down /></button>
      </Cluster>
      <Cluster $gap={9} $ml={6}>
        <Glyph w={23} h={20}><path d="M4 3h15v14H4z" fill={c.icon} stroke="none" /><path d="M1 5V1h4M18 1h4v4M22 15v4h-4M5 19H1v-4" /></Glyph>
        <button aria-label="Screen mode"><Down /></button>
      </Cluster>
      <Cluster $gap={9} $ml={6}>
        <Solid w={24} h={16}><path d="M0 0h11v16H0zM13 0h11v7H13zM13 9h11v7H13z" /></Solid>
        <button aria-label="Arrange documents"><Down /></button>
      </Cluster>
      <Cluster $gap={0} $ml={8}>
        <IconButton aria-label="GPU performance">
          <Solid w={24} h={23}><path d="M23 0c-7 1-12 6-14 13l3 4C18 14 22 8 23 0zM9 5C5 6 2 9 0 13l6-1c1-3 2-5 5-7zM20 12c-2 2-4 4-7 6l-1 6c4-2 7-6 8-12zM7 15l3 4-3 1z" /></Solid>
        </IconButton>
      </Cluster>
    </Cluster>
    <WindowTitle>Adobe InDesign CC 2019</WindowTitle>
    <Cluster $gap={18}>
      <Pill $w={163} $size={16}>
        <Glyph w={17} h={17} stroke="#e0e0e0" sw={1.800}><path d="M5 7H1v9h15V7h-4M8.500 12V2M5 5l3.500-4L12 5" /></Glyph>
        Publish Online
      </Pill>
      <Glyph w={19} h={26}><path d="M6 19c0-4-5-5-5-10.500a8.500 8.500 0 0 1 17 0C18 14 13 15 13 19z" /><path d="M6 19h7v4l-3.500 3L6 23z" fill={c.icon} stroke="none" /></Glyph>
      <VLine $h={26} />
      <Workspace>Digital Publishing<Down /></Workspace>
      <VLine $h={26} />
    </Cluster>
    <Cluster $gap={0} $ml={8}>
      <StockSearch>
        <Glyph w={23} h={15} sw={1.800} stroke="#ddd"><circle cx="9" cy="6" r="5" /><path d="M5.500 9.500L0 15" /><path d="M14 9h8l-4 4z" fill="#ddd" stroke="none" /></Glyph>
        <input aria-label="Search Adobe Stock" placeholder="Adobe Stock" />
      </StockSearch>
    </Cluster>
  </TitleBar>
);

const FitIcon = ({ children }: { children?: React.ReactNode }) => (
  <IconButton aria-label="Fitting option">
    <Glyph w={22} h={22} sw={1.500}><path d="M3 3h16v16H3z" />{children}<g transform="translate(1 1)">{corners(16)}</g></Glyph>
  </IconButton>
);

const Controls = () => (
  <ControlBar>
    <Group $pl={6} $pr={0} $cols="30px" $open>
      <Tall><Glyph w={3} h={27} stroke="#3a3a3a" sw={3}><path d="M1.500 0v27" strokeDasharray="1 2" /></Glyph></Tall>
    </Group>
    <Group $pl={0} $pr={13} $cols="51px 17px 133px 18px 130px 18px">
      <Tall>
        <Glyph w={34} h={34} sw={1.500}>
          <path d="M5 5h24v24H5z" />
          {[1, 13, 25].map((y) => [1, 13, 25].map((x) => (
            <rect key={`${x}-${y}`} x={x} y={y} width="8" height="8" fill={x + y === 2 ? "#fff" : c.panel} />
          )))}
        </Glyph>
      </Tall>
      <Tag htmlFor="fx">X:</Tag><StepField id="fx" w={116} value="88 px" label="X position" />
      <Tag htmlFor="fw">W:</Tag><StepField id="fw" w={116} value="734 px" label="Width" />
      <Tall><Glyph w={18} h={21} sw={2}><path d="M5 8V5a4 4 0 0 1 8 0v3M5 13v3a4 4 0 0 0 8 0v-3M9 6v9M1 1l16 18" /></Glyph></Tall>
      <Tag htmlFor="fy">Y:</Tag><StepField id="fy" w={116} value="114 px" label="Y position" />
      <Tag htmlFor="fh">H:</Tag><StepField id="fh" w={116} value="490 px" label="Height" />
    </Group>
    <Group $pl={10} $cols="25px 124px 42px 23px 116px">
      <Glyph w={20} h={20}><path d="M1 19V1" /><path d="M1 1h18v18H1" strokeDasharray="1.500 1.500" /><path d="M3 10h9" strokeWidth="2" /><path d="M11 6l5 4-5 4z" fill={c.icon} stroke="none" /></Glyph>
      <StepField w={116} value="100%" label="Scale X" drop />
      <Tall><Toggle $on aria-label="Constrain scaling"><Glyph w={10} h={20} sw={2}><path d="M2 8V4a3 3 0 0 1 6 0v4a3 3 0 0 1-3 2M8 12v4a3 3 0 0 1-6 0v-4a3 3 0 0 1 3-2" /></Glyph></Toggle></Tall>
      <Glyph w={16} h={12}><path d="M14 11H1L9 1M5 5c3 1 4 3 4 6" /></Glyph>
      <StepField w={116} value="0°" label="Rotation" drop />
      <Glyph w={20} h={20}><path d="M1 1h18" /><path d="M19 1v18H1V1" strokeDasharray="1.500 1.500" /><path d="M10 3v9" strokeWidth="2" /><path d="M6 11l4 5 4-5z" fill={c.icon} stroke="none" /></Glyph>
      <StepField w={116} value="100%" label="Scale Y" drop />
      <Solid w={16} h={12}><path d="M5 0h11l-5 12H0z" /></Solid>
      <StepField w={116} value="0°" label="Shear" drop />
    </Group>
    <Group $pl={11} $cols="37px 36px 35px">
      <IconButton aria-label="Rotate clockwise"><Glyph w={24} h={22} sw={2}><path d="M2 12a9 9 0 0 1 15-8" /><path d="M2 12a9 9 0 0 0 18 1" strokeDasharray="1.500 2.500" strokeWidth="1.500" /><path d="M22 1v9h-9z" fill={c.icon} stroke="none" /></Glyph></IconButton>
      <IconButton aria-label="Rotate counterclockwise"><Glyph w={24} h={22} sw={2}><path d="M20 12A9 9 0 0 0 5 4" /><path d="M20 12a9 9 0 0 1-18 1" strokeDasharray="1.500 2.500" strokeWidth="1.500" /><path d="M0 1v9h9z" fill={c.icon} stroke="none" /></Glyph></IconButton>
      <Tall>
        <Stacked>
          <Frame>P</Frame>
          <Frame><Glyph w={34} h={34} sw={2} stroke="#f0f0f0"><path d="M1 6V1h5M28 1h5v5M33 28v5h-5M6 33H1v-5" /></Glyph></Frame>
        </Stacked>
      </Tall>
      <IconButton aria-label="Flip horizontal"><Glyph w={24} h={22}><path d="M1 4v14l7-7z" /><path d="M12 0v22" strokeDasharray="1.500 1.500" /><path d="M23 3v16l-8-8z" fill={c.icon} /></Glyph></IconButton>
      <IconButton aria-label="Flip vertical"><Glyph w={22} h={24}><path d="M4 1h14l-7 7z" /><path d="M0 12h22" strokeDasharray="1.500 1.500" /><path d="M3 23h16l-8-8z" fill={c.icon} /></Glyph></IconButton>
    </Group>
    <Group $pl={14} $pr={10} $cols="33px 25px">
      <IconButton $dim aria-label="Select container"><Tree dir="up" /></IconButton>
      <IconButton aria-label="Select previous object"><Tree dir="left" /></IconButton>
      <IconButton $dim aria-label="Select content"><Tree dir="down" /></IconButton>
      <IconButton aria-label="Select next object"><Tree dir="right" /></IconButton>
    </Group>
    <Group $pl={8} $pr={7} $cols="31px 22px">
      <IconButton aria-label="Fill"><NoneSwatch /></IconButton><MoreButton aria-label="Fill options"><Right /></MoreButton>
      <IconButton aria-label="Stroke"><NoneSwatch stroke /></IconButton><MoreButton aria-label="Stroke options"><Right /></MoreButton>
    </Group>
    <Group $pl={8} $cols="116px">
      <StepField w={116} value="0 pt" label="Stroke weight" drop />
      <Field $w={116}>
        <Preview><Glyph w={72} h={10} stroke="#000" sw={10}><path d="M0 5h72" /></Glyph></Preview>
        <DropButton aria-label="Stroke type"><Down /></DropButton>
      </Field>
    </Group>
    <Group $pl={9} $cols="118px">
      <Line $gap={20} $pl={3}>
        <Glyph w={22} h={18}><path d="M3 3h12v12H3z" strokeDasharray="4 2" /><path d="M1 1h4v4H1zM13 1h4v4h-4zM1 13h4v4H1zM13 13h4v4h-4z" fill={c.icon} stroke="none" /><path d="M19 15h3l-1.500 3z" fill={c.icon} stroke="none" /></Glyph>
        <Glyph w={18} h={20}><path d="M3 1h12v14H3z" /><path d="M0 16h18v3H0z" fill="#8a8a8a" stroke="none" /></Glyph>
        <Fx>fx.</Fx>
      </Line>
      <Line $gap={9}>
        <Glyph w={16} h={16}><path d="M1 1h14v14H1z" fill="#6a6a6a" /><path d="M2 2h4v4H2zM10 2h4v4h-4zM6 6h4v4H6zM2 10h4v4H2zM10 10h4v4h-4z" fill="#a0a0a0" stroke="none" /></Glyph>
        <Field $w={93}>
          <Value aria-label="Opacity" defaultValue="100%" $strong />
          <DropButton aria-label="Opacity slider"><Right /></DropButton>
        </Field>
      </Line>
    </Group>
    <Group $pl={7} $pr={7} $cols="37px 29px">
      <Toggle $on aria-label="No text wrap"><Glyph w={19} h={18}>{wrapLines}<path d="M5 3h9v12H5z" fill={c.icon} stroke="none" opacity=".8" /></Glyph></Toggle>
      <Toggle aria-label="Wrap around bounding box"><Glyph w={19} h={18}>{wrapLines}<path d="M4 3h11v12H4z" fill={c.panel} stroke="none" /><path d="M6 4h7v10H6z" /></Glyph></Toggle>
      <Toggle aria-label="Wrap around object shape"><Glyph w={19} h={18}>{wrapLines}<ellipse cx="9.500" cy="9" rx="6" ry="7" fill={c.icon} stroke={c.panel} /></Glyph></Toggle>
      <Toggle aria-label="Jump object"><Glyph w={19} h={18}><path d="M0 1h19M0 13h19M0 17h19" /><path d="M5 4h9v6H5z" fill={c.icon} stroke="none" /></Glyph></Toggle>
    </Group>
    <Group $pl={8} $cols="26px 115px">
      <Glyph w={20} h={20}><path d="M7 3h6M7 17h6M3 7v6M17 7v6" strokeWidth="2" stroke="#8a8a8a" /><path d="M0 0h6v6H0zM14 0h6v6h-6zM0 14h6v6H0zM14 14h6v6h-6z" fill="#2f8be6" stroke="none" /></Glyph>
      <StepField w={115} value="12 px" label="Corner size" />
      <span />
      <Field $w={115}>
        <Preview><Glyph w={82} h={20} stroke="#111" sw={2}><path d="M0 1h78v19" /></Glyph></Preview>
        <DropButton aria-label="Corner shape"><Down /></DropButton>
      </Field>
    </Group>
    <Group $pl={12} $pr={11} $cols="177px">
      <Line $gap={14}>
        <FitIcon><path d="M4 4h14v11H4z" fill={c.icon} stroke="none" /></FitIcon>
        <FitIcon><path d="M4 4h9v14H4z" fill={c.icon} stroke="none" /></FitIcon>
        <TightLine $h={28} />
        <FitIcon><path d="M4 4h7v7H4z" fill={c.icon} stroke="none" /><path d="M11 8h6M8 11v6" /></FitIcon>
        <FitIcon><path d="M4 4h7v7H4z" fill={c.icon} stroke="none" /><path d="M11 7h6M13 15V9" /></FitIcon>
        <FitIcon><path d="M7 7h8v8H7z" fill={c.icon} stroke="none" /></FitIcon>
      </Line>
      <Line $gap={8} $between>
        <CheckRow text="Auto-Fit" />
        <IconButton aria-label="Fill frame"><Glyph w={22} h={22}><path d="M1 1h20v20H1z" strokeDasharray="3 1.500" /><path d="M5 5h4v1h4V5h4v4h-1v4h1v4h-4v-1H9v1H5v-4h1V9H5z" fill={c.icon} stroke="none" /></Glyph></IconButton>
      </Line>
    </Group>
    <Group $grow $pr={13}>
      <Tall><IconButton aria-label="Quick apply"><Solid w={14} h={22}><path d="M9 0L0 12h5l-2 10L14 8H8z" /></Solid></IconButton></Tall>
    </Group>
    <Group $pl={11} $pr={10} $open>
      <IconButton aria-label="Customize"><FaCog size={15} color={c.icon} /></IconButton>
      <IconButton aria-label="Panel menu"><Glyph w={17} h={12}><path d="M0 1h17M0 6h17M0 11h17" /></Glyph></IconButton>
    </Group>
  </ControlBar>
);

const ToolPanel = () => (
  <Toolbar>
    <PanelTop><Chevrons /></PanelTop>
    <Grip />
    <Tools>
      {tools.map((set, i) => (
        <ToolSet key={i}>
          {set.map((t) => (
            <Tool key={t.name} $on={t.on} aria-label={t.name}>{t.art}{t.fly && <Flyout />}</Tool>
          ))}
        </ToolSet>
      ))}
    </Tools>
    <SwatchArea>
      <Glyph w={40} h={65}>
        <path d="M6 5h9v9H6z" stroke="#1c1c1c" strokeWidth="3" fill="#777" />
        <path d="M1 1h9v9H1z" fill="#fff" stroke="#111" strokeWidth="2" />
        <path d="M1 10l9-9" stroke="#e8110f" />
        <path d="M28 8h6q3 0 3 8" strokeWidth="2" /><path d="M25 8l5-4v8zM33 14h8l-4 5z" fill={c.icon} stroke="none" />
        <path d="M13 36h26v26H13z" fill="#fff" stroke="none" /><path d="M20 43h12v12H20z" fill="#555" stroke="#333" strokeWidth="1" />
        <path d="M15 59L37 37" stroke="#e8110f" strokeWidth="3" />
        <path d="M0 23h27v27H0z" fill="#fff" stroke="#777" strokeWidth="1" /><path d="M1 48L26 24" stroke="#e8110f" strokeWidth="3" />
      </Glyph>
      <Cluster $gap={6}>
        <Glyph w={19} h={16}><rect width="19" height="16" rx="2" fill="#2e2e2e" stroke="none" /><path d="M5 3h10v10H5z" /></Glyph>
        <SerifT $size={15} $lh={16} $c="#8a8a8a">T</SerifT>
      </Cluster>
      <ModeTool $on aria-label="Apply none"><Glyph w={21} h={19}><path d="M1 1h19v17H1z" fill="#fff" stroke="#999" /><path d="M2 17L19 2" stroke="#e8110f" strokeWidth="2.500" /></Glyph><Flyout /></ModeTool>
      <ModeTool $on aria-label="View mode"><Glyph w={15} h={15}><path d="M1 1h13v13H1zM1 3h13" /><path d="M4 5h5v4H4zM7 9v2.500h5V7H9" strokeWidth="1.200" /></Glyph><Flyout /></ModeTool>
    </SwatchArea>
  </Toolbar>
);

const HRuler = () => (
  <RulerX>
    {["200", "100", "0", "100", "200", "300", "400", "500", "600", "700", "800", "900", "1000", "1100", "1200"].map((n, i) => (
      <SegX key={i}>
        <Glyph w={108} h={20} stroke="#777" sw={1}>
          <path d="M.5 0v20" stroke="#999" />
          {ticks.map((t) => <path key={t} d={`M${Math.round(t * 10.8) + 0.5} 20v-${t === 5 ? 5 : 2}`} />)}
        </Glyph>
        <span>{n}</span>
      </SegX>
    ))}
    <MarkX />
  </RulerX>
);

const VRuler = () => (
  <RulerY>
    {["0", "100", "200", "300", "400", "500", "600", "700"].map((n) => (
      <SegY key={n}>
        <Glyph w={20} h={108} stroke="#888" sw={1}>
          <path d="M0 .5h20" />
          {ticks.map((t) => <path key={t} d={`M20 ${Math.round(t * 10.8) + 0.5}h-${t === 5 ? 5 : 2}`} />)}
        </Glyph>
        <p>{n}</p>
      </SegY>
    ))}
    <MarkY />
  </RulerY>
);

const FrameDrawing = () => (
  <svg width="1106" height="829" viewBox="0 0 1106 829" fill="none" role="img" aria-label="Web content frame">
    <path d="M38.500 38.500h1028M38.500 790.500h1028" stroke="#d98ad9" />
    <path d="M38.500 38.500v752" stroke="#b06ae0" />
    <path d="M1067 38.500v752" stroke="#dcc6f5" strokeWidth="2" />
    <g stroke="#6ea4d8">
      <path d="M94.500 123.500h793v529h-793zM94.500 123.500l793 529M887.500 123.500l-793 529" />
      {[94.500, 491, 887.500].map((x) => [123.500, 388, 652.500].map((y) =>
        x === 491 && y === 388 ? null : <rect key={`${x}-${y}`} x={x - 3.500} y={y - 3.500} width="7" height="7" fill="#fff" />
      ))}
    </g>
  </svg>
);

const OverlaysPanel = () => (
  <Overlays>
    <OverlaysHead>
      <h2>Overlays</h2>
      <button aria-label="Collapse panel"><Chevrons big /></button>
    </OverlaysHead>
    <Kinds>
      {kinds.map((k) => <Kind key={k} $on={k === "Web Content"}><button>{k}</button></Kind>)}
    </Kinds>
    <OptionsTitle>Options</OptionsTitle>
    <OptionsForm>
      <UrlLabel>
        <label htmlFor="url">URL or File:</label>
        <button type="button" aria-label="Browse">
          <Glyph w={18} h={15} stroke="#1c1c1c"><path d="M1 3V1h6l1 2h9v10H1z" fill="#8d8d8d" /><path d="M1 3h16" /><path d="M0 14.500h18" stroke="#ccc" strokeWidth="1" /></Glyph>
        </button>
      </UrlLabel>
      <UrlInput id="url" defaultValue="/Users/temasekmac/Desktop/Forum" />
      <Choices>
        <CheckRow text="Auto Play" on />
        <Delay>
          <label htmlFor="delay">Delay:</label>
          <StepField id="delay" w={88} value="0" label="Delay" />
          <span>second</span>
        </Delay>
        <CheckRow text="Transparent Background" />
        <CheckRow text="Allow User Interaction" on />
        <CheckRow text="Scale Content to Fit" />
        <CheckRow text="Allow API Access" />
      </Choices>
    </OptionsForm>
    <OverlaysFoot>
      <Pill $w={77} $size={14}>Reset</Pill>
      <IconButton aria-label="Delete overlay"><Glyph w={15} h={17} stroke="#aaa"><path d="M0 3.500h15M5 3V1h5v2M2 4v12h11V4M5.500 6v8M7.500 6v8M9.500 6v8" strokeWidth="1.300" /></Glyph></IconButton>
    </OverlaysFoot>
  </Overlays>
);

const DocumentArea = () => (
  <Doc>
    <Tabs>
      <Tab>
        <button aria-label="Close tab"><Glyph w={9} h={9} sw={1.800} stroke="#e8e8e8"><path d="M1 1l7 7M8 1L1 8" /></Glyph></button>
        <span>*Untitled-3 @ 53% [GPU Preview]</span>
      </Tab>
    </Tabs>
    <Stage>
      <Corner><Glyph w={20} h={21} stroke="#999" sw={1}><path d="M5.500 0v21M0 7.500h20" strokeDasharray="1 1" /></Glyph></Corner>
      <HRuler />
      <ScrollColumn><Glyph w={10} h={6} stroke="#aaa"><path d="M1 5l4-4 4 4" /></Glyph></ScrollColumn>
      <VRuler />
      <Canvas><Page><FrameDrawing /></Page></Canvas>
    </Stage>
    <StatusBar>
      <StatusTools>
        <Cluster $gap={18}>
          <Solid w={12} h={12}><path d="M0 0h2v12H0zM12 0v12L3 6z" fill="#858585" /></Solid>
          <Solid w={7} h={12}><path d="M7 0v12L0 6z" fill="#858585" /></Solid>
        </Cluster>
        <PageField $w={120}>
          <Value aria-label="Page" defaultValue="1" $strong />
          <DropButton aria-label="Choose page"><Down /></DropButton>
        </PageField>
        <Cluster $gap={18}>
          <Solid w={7} h={12}><path d="M0 0v12l7-6z" fill="#858585" /></Solid>
          <Solid w={12} h={12}><path d="M12 0h-2v12h2zM0 0v12l9-6z" fill="#858585" /></Solid>
        </Cluster>
        <Cluster $gap={25} $ml={22}>
          <Glyph w={17} h={17}><circle cx="8.500" cy="8.500" r="8.500" fill={c.icon} stroke="none" /><path d="M5 4h4l4 4v6H5zM9 4v4h4" fill="#777" stroke="#4a4a4a" /></Glyph>
          <StatusButton $w={147}>Digital Publishing<Down /></StatusButton>
        </Cluster>
        <Cluster $gap={6} $ml={22}>
          <Dot />
          <StatusButton $w={95}>No errors<Down color="#aaa" /></StatusButton>
        </Cluster>
      </StatusTools>
      <ScrollTrack>
        <Glyph w={6} h={18}><path d="M5 4L1 9l4 5" /></Glyph>
        <Thumb />
        <Glyph w={36} h={20}><path d="M6 10l-6 6M17 11v9M27 11v9M36 11v9" /></Glyph>
      </ScrollTrack>
    </StatusBar>
    <OverlaysPanel />
  </Doc>
);

export default function App() {
  return (
    <>
      <Global />
      <Shell>
        <SystemMenu />
        <WindowBar />
        <Controls />
        <Body>
          <ToolPanel />
          <DocumentArea />
          <Dock>
            <PanelTop $right><Chevrons left /></PanelTop>
            {dockRows.map((r) => (
              <DockRow key={r.name}>
                <Grip />
                <DockButton $on={r.on}>{r.art}{r.name}</DockButton>
              </DockRow>
            ))}
          </Dock>
          <IconDock>
            <PanelTop $right><Chevrons left /></PanelTop>
            {dockSections.map((s, i) => (
              <IconSection key={i}>
                <Grip />
                <IconStack>
                  {s.map((d) => <DockIcon key={d.name} aria-label={d.name}>{d.art}</DockIcon>)}
                </IconStack>
              </IconSection>
            ))}
          </IconDock>
        </Body>
      </Shell>
    </>
  );
}
